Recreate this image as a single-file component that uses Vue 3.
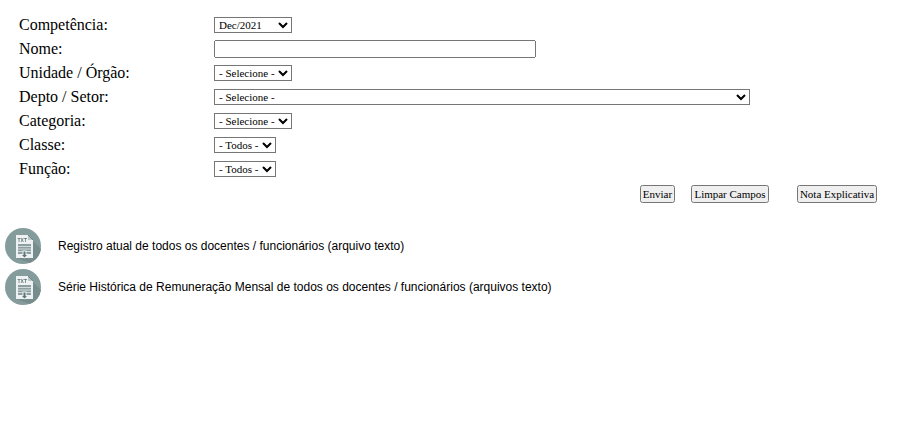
<template>
  <div class="page">
    <form class="filter-form" @submit.prevent>
      <div v-for="row in rows" :key="row.label" class="form-row">
        <label class="form-label">{{ row.label }}</label>
        <input v-if="row.input" class="name-input" type="text" />
        <select v-else class="form-select" :class="row.cls">
          <option>{{ row.value }}</option>
        </select>
      </div>
      <div class="form-actions">
        <button class="btn btn-send" type="submit">Enviar</button>
        <button class="btn btn-clear" type="button">Limpar Campos</button>
        <button class="btn btn-note" type="button">Nota Explicativa</button>
      </div>
    </form>
    <div class="downloads">
      <a v-for="item in downloads" :key="item" class="download">
        <svg class="download-icon" width="36" height="36" viewBox="0 0 36 36">
          <circle cx="18" cy="18" r="18" fill="#859c9d" />
          <path d="M27 12 36 21a18 18 0 0 1-11 14L11 30z" fill="#778c8d" />
          <path d="M11 7h12l5 5v18H11z" fill="#eef1f1" />
          <path d="M23 7v5h5z" fill="#b9c6c7" />
          <path d="M23 7l5 5" stroke="#5f7476" stroke-width=".8" />
          <rect x="13" y="16" width="13" height="10" fill="#8c9fa1" />
          <path d="M13 18.500h13M13 21h13M13 23.500h13" stroke="#e4e9e9" stroke-width=".8" />
          <path d="M17.500 22.500h4v3.500h2.500l-4.500 4.500-4.500-4.500h2.500z" fill="#eef1f1" />
          <path d="M18.500 23.500h2v3.500h1.500l-2.500 2.500-2.500-2.500h1.500z" fill="#5f7476" />
          <text x="12.500" y="13.500" class="icon-text">TXT</text>
        </svg>
        <span class="download-text">{{ item }}</span>
      </a>
    </div>
  </div>
</template>

<script setup>
const rows = [
  { label: 'Competência:', value: 'Dec/2021', cls: 'w-78' },
  { label: 'Nome:', input: true },
  { label: 'Unidade / Órgão:', value: '- Selecione -', cls: 'w-78' },
  { label: 'Depto / Setor:', value: '- Selecione -', cls: 'w-536' },
  { label: 'Categoria:', value: '- Selecione -', cls: 'w-78' },
  { label: 'Classe:', value: '- Todos -', cls: 'w-62' },
  { label: 'Função:', value: '- Todos -', cls: 'w-62' }
]

const downloads = [
  'Registro atual de todos os docentes / funcionários (arquivo texto)',
  'Série Histórica de Remuneração Mensal de todos os docentes / funcionários (arquivos texto)'
]
</script>

<style scoped>
.page {
  width: 917px;
  height: 424px;
  overflow: hidden;
  background: #fff;
  font-family: "Liberation Serif", serif;
  color: #000;
}
.filter-form {
  padding: 13px 40px 0 19px;
}
.form-row {
  display: flex;
  align-items: center;
  height: 24px;
}
.form-label {
  width: 195px;
  font-size: 16px;
  flex-shrink: 0;
}
.form-select {
  height: 16px;
  padding: 0;
  font-family: "Liberation Serif", serif;
  font-size: 11px;
  box-sizing: border-box;
  background: #fff;
  color: #000;
}
.w-78 { width: 78px; }
.w-62 { width: 62px; }
.w-536 { width: 536px; }
.name-input {
  width: 322px;
  height: 18px;
  padding: 1px 2px;
  box-sizing: border-box;
  font-size: 11px;
}
.form-actions {
  display: flex;
  justify-content: flex-end;
  margin-top: 4px;
}
.btn {
  height: 18px;
  padding: 0;
  box-sizing: border-box;
  font-family: "Liberation Serif", serif;
  font-size: 11px;
}
.btn-send { width: 35px; }
.btn-clear { width: 78px; margin-left: 16px; }
.btn-note { width: 80px; margin-left: 28px; }
.downloads {
  display: flex;
  flex-direction: column;
  gap: 5px;
  margin-top: 25px;
  padding-left: 5px;
}
.download {
  display: flex;
  align-items: center;
  height: 36px;
}
.download-icon {
  flex-shrink: 0;
  filter: blur(0.3px);
}
.icon-text {
  font-family: "Liberation Sans", sans-serif;
  font-size: 5px;
  font-weight: 700;
  fill: #5f7476;
}
.download-text {
  margin-left: 17px;
  font-family: "Liberation Sans", sans-serif;
  font-size: 12px;
}
</style>
